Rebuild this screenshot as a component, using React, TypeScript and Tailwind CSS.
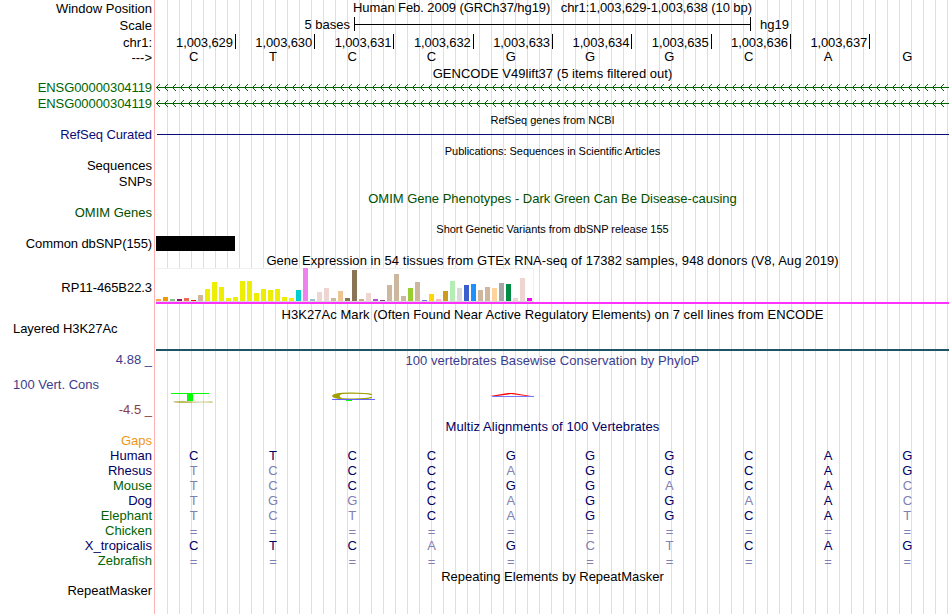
import React from 'react';

type Label = { text: string; box: string };

const labels: Label[] = [
  { text: 'Window Position', box: 'h-[17px]' },
  { text: 'Scale', box: 'h-[17px]' },
  { text: 'chr1:', box: 'h-[15px]' },
  { text: '--->', box: 'h-[30px]' },
  { text: 'ENSG00000304119', box: 'h-[16px] tracking-[-0.07px] text-[#006400]' },
  { text: 'ENSG00000304119', box: 'h-[31px] tracking-[-0.07px] text-[#006400]' },
  { text: 'RefSeq Curated', box: 'h-[31px] tracking-[-0.1px] text-[#0c0c78]' },
  { text: 'Sequences', box: 'h-[16px]' },
  { text: 'SNPs', box: 'h-[31px]' },
  { text: 'OMIM Genes', box: 'h-[31px] text-[#005000]' },
  { text: 'Common dbSNP(155)', box: 'h-[44px] tracking-[-0.1px]' },
  { text: 'RP11-465B22.3', box: 'h-[41px] tracking-[-0.07px]' },
  { text: 'Layered H3K27Ac', box: 'h-[31px] self-start pl-[13px] tracking-[-0.07px]' },
  { text: '4.88 _', box: 'h-[25px] text-[#3c3c8c]' },
  { text: '100 Vert. Cons', box: 'h-[25px] self-start pl-[13px] text-[#3c3c8c]' },
  { text: '-4.5 _', box: 'h-[31px] text-[#8c3c3c]' },
  { text: 'Gaps', box: 'h-[15px] text-[#f09614]' },
  { text: 'Human', box: 'h-[15px] text-[#000064]' },
  { text: 'Rhesus', box: 'h-[15px] text-[#000064]' },
  { text: 'Mouse', box: 'h-[15px] text-[#006400]' },
  { text: 'Dog', box: 'h-[15px] text-[#000064]' },
  { text: 'Elephant', box: 'h-[15px] text-[#006400]' },
  { text: 'Chicken', box: 'h-[15px] text-[#006400]' },
  { text: 'X_tropicalis', box: 'h-[15px] text-[#000064]' },
  { text: 'Zebrafish', box: 'h-[30px] text-[#006400]' },
  { text: 'RepeatMasker', box: 'h-[15px]' },
];

const human = 'CTCCGGGCAG';
const alignment = [
  human,
  'TCCCAGGCAG',
  'TCCCGGACAC',
  'TGGCAGGAAC',
  'TCTCAGGCAT',
  '==========',
  'CTCAGCTCAG',
  '==========',
];

const positions = [629, 630, 631, 632, 633, 634, 635, 636, 637];

// Median expression per tissue: [height, colour]
const tissues: [number, string][] = [
  [2, '#ffa54f'], [4, '#ee9a00'], [2, '#8fbc8f'], [2, '#8b1c62'], [3, '#ee6a50'], [1, '#ff0000'],
  [6, '#cdb79e'], [12, '#eeee00'], [19, '#eeee00'], [14, '#eeee00'], [3, '#eeee00'], [4, '#eeee00'],
  [20, '#eeee00'], [20, '#eeee00'], [8, '#eeee00'], [12, '#eeee00'], [11, '#eeee00'], [12, '#eeee00'],
  [4, '#eeee00'], [3, '#eeee00'], [11, '#00cdcd'], [33, '#ee82ee'], [2, '#9ac0cd'], [9, '#eed5d2'],
  [13, '#eed5d2'], [3, '#cdb79e'], [10, '#eec591'], [3, '#8b7355'], [31, '#8b7355'], [2, '#cdaa7d'],
  [8, '#eed5d2'], [2, '#b452cd'], [1, '#7a378b'], [16, '#cdb79e'], [27, '#cdb79e'], [5, '#cdb79e'],
  [13, '#9acd32'], [19, '#cdb79e'], [1, '#7a67ee'], [7, '#ffd700'], [2, '#ffb6c1'], [10, '#cd9b1d'],
  [20, '#b4eeb4'], [13, '#d9d9d9'], [16, '#3a5fcd'], [17, '#1e90ff'], [11, '#cdb79e'], [14, '#cdb79e'],
  [13, '#ffd39b'], [18, '#a6a6a6'], [17, '#008b45'], [3, '#eed5d2'], [23, '#eed5d2'], [3, '#ff00ff'],
];

function Title({ children, box }: { children: React.ReactNode; box: string }) {
  return <div className={`shrink-0 whitespace-pre text-center ${box}`}>{children}</div>;
}

function Bases({ seq, box, colour }: { seq: string; box: string; colour: (c: string, i: number) => string }) {
  return (
    <div className={`-ml-[2px] flex w-[795px] shrink-0 ${box}`}>
      {seq.split('').map((c, i) => (
        <span key={i} className={`w-[79.3px] shrink-0 text-center ${colour(c, i)}`}>{c}</span>
      ))}
    </div>
  );
}

function GeneLine({ box }: { box: string }) {
  const tips = Array.from({ length: 99 }, (_, i) => i * 8);
  return (
    <div className={`shrink-0 ${box}`}>
      <svg width="793" height="7" className="block" shapeRendering="crispEdges">
        <rect x="0" y="3" width="793" height="1" fill="#006400" />
        {tips.map((x) => (
          <path key={x} d={`M${x + 1} 2h1v1h-1zM${x + 2} 1h1v1h-1zM${x + 3} 0h1v1h-1zM${x + 1} 4h1v1h-1zM${x + 2} 5h1v1h-1zM${x + 3} 6h1v1h-1z`} fill="#006400" />
        ))}
      </svg>
    </div>
  );
}

export default function App() {
  return (
    <div className="flex h-[614px] w-[950px] overflow-hidden bg-white font-['Liberation_Sans',Arial,sans-serif] text-[13px] leading-[15px] text-black">
      <div className="flex w-[154px] shrink-0 flex-col items-end pt-px">
        {labels.map((l, i) => (
          <div key={i} className={`shrink-0 whitespace-pre pr-[2px] ${l.box}`}>{l.text}</div>
        ))}
      </div>
      <div className="mr-px w-px shrink-0 bg-[#ffb0b0]" />
      <div className="flex w-[793px] shrink-0 flex-col overflow-hidden bg-[linear-gradient(to_right,transparent_11px,#dcdcf8_11px)] bg-[length:12px_100%]">
        <Title box="h-[17px] tracking-[-0.08px]">{'Human Feb. 2009 (GRCh37/hg19)   chr1:1,003,629-1,003,638 (10 bp)'}</Title>

        <div className="flex h-[17px] shrink-0">
          <span className="w-[194px] text-right">5 bases</span>
          <span className="ml-[4px] flex h-[14px] w-[397px] items-center border-x border-black">
            <span className="h-px w-full bg-black" />
          </span>
          <span className="ml-[9px]">hg19</span>
        </div>

        <div className="flex h-[15px] shrink-0 pl-[0.5px]">
          {positions.map((p) => (
            <span key={p} className="flex w-[79.3px] shrink-0 justify-end">
              <span className="pt-px tracking-[-0.12px]">{`1,003,${p}`}</span>
              <span className="ml-[2px] h-[15px] w-px bg-black" />
            </span>
          ))}
        </div>

        <Bases seq={human} box="h-[17px]" colour={() => 'text-black'} />
        <Title box="h-[18px] tracking-[0.03px]">GENCODE V49lift37 (5 items filtered out)</Title>
        <GeneLine box="h-[16px]" />
        <GeneLine box="h-[14px]" />
        <Title box="h-[20px] text-[11px] leading-[13px]">RefSeq genes from NCBI</Title>
        <div className="mb-[10px] ml-px h-px shrink-0 bg-[#0c0c78]" />
        <Title box="h-[46px] text-[11px] leading-[13px] tracking-[-0.05px]">Publications: Sequences in Scientific Articles</Title>
        <Title box="h-[32px] text-[#005000]">OMIM Gene Phenotypes - Dark Green Can Be Disease-causing</Title>
        <Title box="h-[13px] text-[11px] leading-[13px] tracking-[-0.02px]">Short Genetic Variants from dbSNP release 155</Title>
        <div className="h-[15px] w-[79px] shrink-0 bg-black" />
        <Title box="mt-[2px] h-[15px] tracking-[0.055px]">Gene Expression in 54 tissues from GTEx RNA-seq of 17382 samples, 948 donors (V8, Aug 2019)</Title>

        <div className="flex h-[34px] w-[378px] shrink-0 items-end gap-[2px] border-r border-t border-b border-[#f0f0f0] border-b-[#d8d8d8] bg-white">
          {tissues.map(([h, c], i) => (
            <span key={i} className="w-[5px] shrink-0" style={{ height: h, backgroundColor: c }} />
          ))}
        </div>
        <div className="h-[2px] shrink-0 bg-[#ff32ff]" />

        <Title box="mt-[3px] h-[42px] tracking-[0.05px]">H3K27Ac Mark (Often Found Near Active Regulatory Elements) on 7 cell lines from ENCODE</Title>
        <div className="h-[2px] shrink-0 bg-[#1f5468]" />
        <Title box="mt-[2px] h-[37px] tracking-[0.04px] text-[#3c3c8c]">100 vertebrates Basewise Conservation by PhyloP</Title>

        <svg width="793" height="29" viewBox="156 390 793 29" className="block shrink-0">
          <rect x="171" y="393" width="38" height="1" fill="#00ff00" />
          <rect x="187" y="393" width="6" height="8" fill="#00ff00" />
          <path d="M173 401.6Q181 401 190 401.5T212 401.5L213 402.5Q202 402 193 402.5T175 402.5Z" fill="#a8a430" />
          <path d="M372 394.6C365 392.8 333 392 333 396C333 400 365 399.5 372 397.4" fill="none" stroke="#a0a000" strokeWidth="1.1" />
          <path d="M332 396Q334 393.5 343 393.6Q336 396 343 398.5Q334 398.5 332 396Z" fill="#a0a000" />
          <rect x="332" y="399" width="43" height="1" fill="#6464ff" />
          <rect x="346" y="400" width="6" height="1" fill="#00ff00" />
          <path d="M490 396L508 393H513L531 396H526L511 394L497 396Z" fill="#ff0000" />
          <rect x="492" y="396" width="42" height="1" fill="#7878ff" />
        </svg>

        <Title box="h-[29px] tracking-[0.08px] text-[#000064]">Multiz Alignments of 100 Vertebrates</Title>
        {alignment.map((seq, r) => (
          <Bases
            key={r}
            seq={seq}
            box={seq[0] === '=' ? 'h-[15px] pt-px' : 'h-[15px]'}
            colour={(c, i) => (c === human[i] ? 'text-[#000064]' : 'text-[#8080b2]')}
          />
        ))}
        <Title box="mt-px h-[15px]">Repeating Elements by RepeatMasker</Title>
      </div>
    </div>
  );
}
